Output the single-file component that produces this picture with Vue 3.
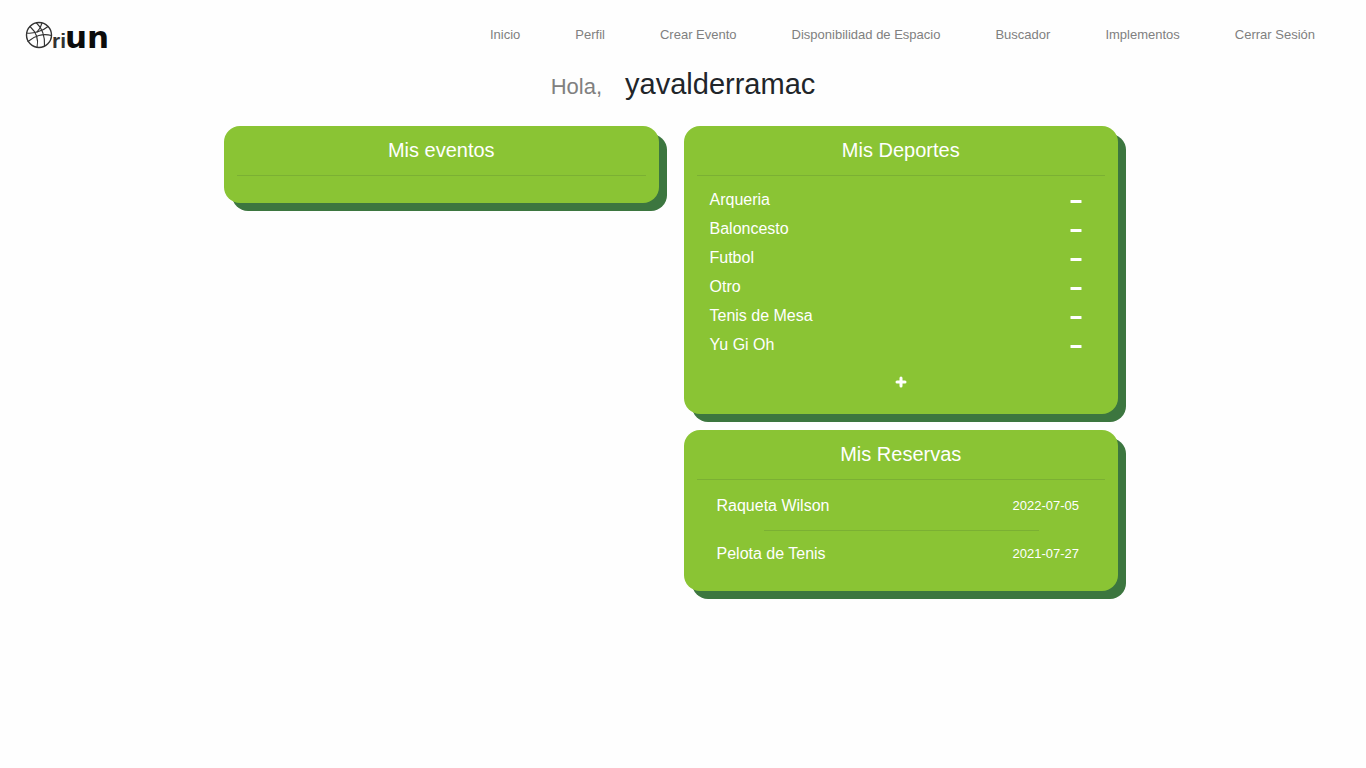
<script setup>
import { ref } from 'vue'

const links = ['Inicio', 'Perfil', 'Crear Evento', 'Disponibilidad de Espacio', 'Buscador', 'Implementos', 'Cerrar Sesión']
const sports = ref(['Arqueria', 'Baloncesto', 'Futbol', 'Otro', 'Tenis de Mesa', 'Yu Gi Oh'])
const bookings = [
  { item: 'Raqueta Wilson', date: '2022-07-05' },
  { item: 'Pelota de Tenis', date: '2021-07-27' }
]
const removeSport = (name) => {
  sports.value = sports.value.filter((s) => s !== name)
}
</script>

<template>
  <div class="page">
    <header class="topbar">
      <a class="brand" href="#" aria-label="OriUN">
        <svg width="92" height="41" viewBox="0 -7 92 41">
          <g fill="none" stroke="#333" stroke-width="1.1" stroke-linecap="round">
            <circle cx="14" cy="14" r="12.5" stroke-width="1.4" />
            <path d="M11.5 2C17 7 20 15 19.5 25" />
            <path d="M1.7 12C8 13 18 10 23 5.5" />
            <path d="M3 20.5C9 15 18 12 26.3 14.5" />
            <path d="M5 5.5C11 11 14 18 12 26.3" />
            <path d="M17 2C16 6 14 9 12 11" />
          </g>
          <text class="brand-ri" x="27" y="27">ri</text>
          <text class="brand-un" x="40" y="27">un</text>
        </svg>
      </a>
      <nav class="nav">
        <a v-for="link in links" :key="link" href="#">{{ link }}</a>
      </nav>
    </header>

    <main>
      <div class="greeting">
        <span class="hello">Hola,</span>
        <h1>yavalderramac</h1>
      </div>

      <div class="columns">
        <section class="card card-empty">
          <h2>Mis eventos</h2>
          <hr />
        </section>

        <div class="stack">
          <section class="card">
            <h2>Mis Deportes</h2>
            <hr />
            <ul class="sports">
              <li v-for="sport in sports" :key="sport">
                <span>{{ sport }}</span>
                <button type="button" :aria-label="'Quitar ' + sport" @click="removeSport(sport)">
                  <svg width="12" height="15" viewBox="0 0 12 15"><rect x="0.5" y="8" width="11" height="3" rx="0.6" fill="#fff" /></svg>
                </button>
              </li>
            </ul>
            <button type="button" class="add" aria-label="Agregar deporte">
              <svg width="12" height="12" viewBox="0 0 12 12"><path d="M6 2V10M2 6H10" stroke="#fff" stroke-width="3" stroke-linecap="round" /></svg>
            </button>
          </section>

          <section class="card">
            <h2>Mis Reservas</h2>
            <hr />
            <ul class="bookings">
              <li v-for="b in bookings" :key="b.item">
                <span>{{ b.item }}</span>
                <time :datetime="b.date">{{ b.date }}</time>
              </li>
            </ul>
          </section>
        </div>
      </div>
    </main>
  </div>
</template>

<style>
body {
  margin: 0;
  background: #fefefe;
}
</style>

<style scoped>
.page {
  font-family: "Liberation Sans", Arial, sans-serif;
  color: #212529;
}
.topbar {
  display: flex;
  align-items: center;
  justify-content: space-between;
  height: 69px;
  padding: 0 51px 0 25px;
}
.brand svg {
  display: block;
}
.brand-ri {
  font: bold 21px "Liberation Sans", Arial, sans-serif;
  fill: #333;
}
.brand-un {
  font: bold 31px "DejaVu Sans", sans-serif;
  fill: #0c0c0c;
}
.nav {
  display: flex;
  gap: 55px;
}
.nav a {
  color: #808080;
  font-size: 13px;
  line-height: 20px;
  text-decoration: none;
}
.greeting {
  display: flex;
  align-items: baseline;
  justify-content: center;
  gap: 23px;
  height: 57px;
  line-height: 30px;
}
.hello {
  color: #808080;
  font-size: 22px;
}
h1 {
  margin: 0;
  color: #212529;
  font-size: 29px;
  font-weight: 400;
}
.columns {
  display: grid;
  grid-template-columns: 1fr 1fr;
  align-items: start;
  gap: 25px;
  padding: 0 248px 24px 224px;
}
.stack {
  display: grid;
  gap: 16px;
}
.card {
  padding: 12px 13px 0;
  border-radius: 16px;
  background: #8ac434;
  box-shadow: 8px 8px #3c763f;
  color: #fff;
}
.card-empty {
  padding-bottom: 27px;
}
h2 {
  margin: 0;
  font-size: 20px;
  font-weight: 400;
  line-height: 24px;
  text-align: center;
}
hr {
  height: 1px;
  margin: 13px 0 0;
  border: 0;
  background: #7bb033;
}
ul {
  margin: 0;
  padding: 0;
  list-style: none;
}
li {
  display: flex;
  align-items: center;
  justify-content: space-between;
  font-size: 16px;
}
.sports {
  padding: 9px 23px 0 13px;
}
.sports li {
  line-height: 29px;
}
button {
  display: flex;
  align-items: center;
  justify-content: center;
  padding: 0;
  border: 0;
  background: none;
  color: #fff;
  cursor: pointer;
}
.add {
  width: 24px;
  height: 24px;
  margin: 11px auto 20px;
}
.bookings {
  padding: 2px 26px 13px 20px;
}
.bookings li {
  position: relative;
  line-height: 48px;
}
.bookings li + li::before {
  content: "";
  position: absolute;
  top: 0;
  left: 13%;
  right: 11%;
  height: 1px;
  background: #7bb033;
}
time {
  font-size: 13px;
}
</style>
